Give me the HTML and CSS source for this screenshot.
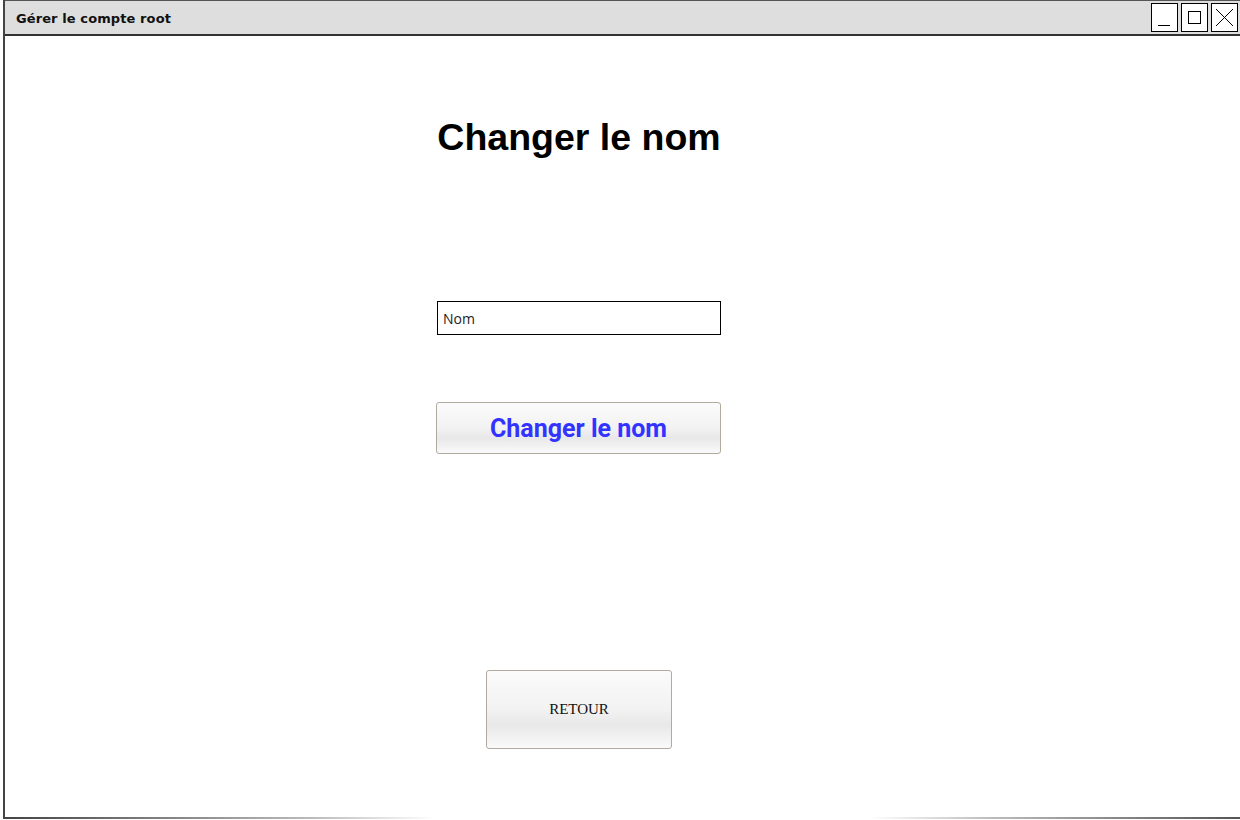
FILE: index.html
```html
<!DOCTYPE html>
<html lang="fr">
<head>
<meta charset="utf-8">
<title>Gérer le compte root</title>
<link rel="stylesheet" href="styles.css">
</head>
<body>
<div class="window">
  <div class="titlebar">
    <span class="title">Gérer le compte root</span>
    <div class="controls">
      <span class="ctl"><svg width="25" height="27" viewBox="0 0 25 27"><line x1="6" y1="21.5" x2="18" y2="21.5" stroke="#000" stroke-width="1"/></svg></span>
      <span class="ctl"><svg width="25" height="27" viewBox="0 0 25 27"><rect x="6.5" y="7.5" width="12" height="12" fill="none" stroke="#000" stroke-width="1"/></svg></span>
      <span class="ctl"><svg width="25" height="27" viewBox="0 0 25 27"><path d="M4 5 L21 22 M21 5 L4 22" stroke="#000" stroke-width="1" fill="none"/></svg></span>
    </div>
  </div>
  <div class="content">
    <h1 class="heading">Changer le nom</h1>
    <div class="field">Nom</div>
    <button class="btn-primary">Changer le nom</button>
    <button class="btn-back">RETOUR</button>
  </div>
  <div class="bottom-line"></div>
</div>
</body>
</html>
```
FILE: styles.css
```css
html, body {
  margin: 0;
  padding: 0;
  background: #fff;
  overflow: hidden;
  width: 1240px;
  height: 820px;
}
.window {
  margin-left: 3px;
  width: 1250px;
  height: 819px;
  border-left: 2px solid #444;
  box-sizing: border-box;
  display: flex;
  flex-direction: column;
  position: relative;
}
.titlebar {
  height: 36px;
  box-sizing: border-box;
  background: #dedede;
  border-top: 1px solid #555;
  border-bottom: 2px solid #333;
  display: flex;
  align-items: center;
  padding-left: 11px;
}
.title {
  font-family: "DejaVu Sans", sans-serif;
  font-weight: bold;
  font-size: 13px;
  color: #111;
  letter-spacing: 0.1px;
  margin-top: 2px;
}
.controls {
  margin-left: auto;
  margin-right: 15px;
  display: flex;
  gap: 3px;
}
.ctl {
  width: 25px;
  height: 27px;
  background: #fff;
  border: 1px solid #000;
  display: block;
}
.ctl svg { display: block; }
.content {
  flex: 1;
  padding-left: 431px;
  width: 286px;
  display: flex;
  flex-direction: column;
  font-family: "Liberation Sans", sans-serif;
}
.heading {
  margin: 80px 0 0 0;
  font-size: 37.5px;
  font-weight: bold;
  line-height: 42px;
  color: #000;
  text-align: center;
  width: 286px;
}
.field {
  margin-top: 143px;
  margin-left: 1px;
  width: 284px;
  height: 34px;
  box-sizing: border-box;
  border: 1px solid #000;
  font-family: "Open Sans", sans-serif;
  font-size: 14px;
  color: #222;
  padding-left: 5px;
  display: flex;
  align-items: center;
}
.btn-primary {
  margin-top: 67px;
  width: 285px;
  height: 52px;
  border: 1px solid #b2aa9e;
  border-radius: 3px;
  background: linear-gradient(#fbfbfb 0%, #f2f2f2 50%, #e8e8e8 70%, #fafafa 100%);
  font-family: Roboto, "Liberation Sans", sans-serif;
  font-weight: bold;
  font-size: 25px;
  color: #3333ff;
  padding: 0;
  padding-top: 1px;
}
.btn-back {
  margin-top: 216px;
  margin-left: 50px;
  width: 186px;
  height: 79px;
  border: 1px solid #b2aa9e;
  border-radius: 3px;
  background: linear-gradient(#fbfbfb 0%, #f2f2f2 50%, #e8e8e8 70%, #fafafa 100%);
  font-family: "Liberation Serif", serif;
  font-size: 15px;
  color: #111;
  padding: 0;
}
.bottom-line {
  height: 2px;
  width: 1237px;
  margin-left: -2px;
  background: linear-gradient(to right, #444 0%, #bbb 25%, #fff 35%, #fff 70%, #bbb 80%, #555 100%);
}
```
